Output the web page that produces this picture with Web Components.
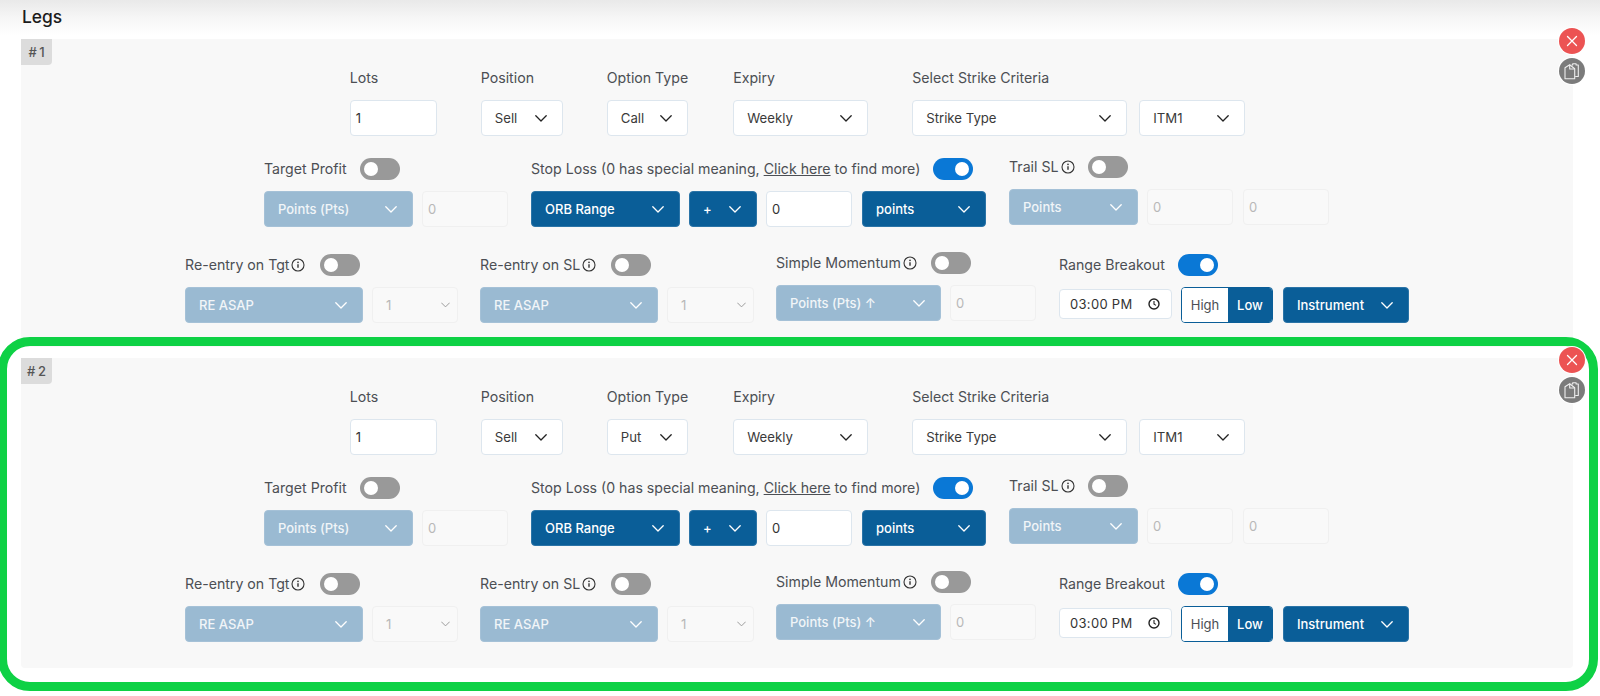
<!DOCTYPE html>
<html lang="en"><head><meta charset="utf-8"><title>Legs</title>
<style>
html,body{margin:0;padding:0;background:#fff;height:696px;overflow:hidden;font-family:Inter,"Liberation Sans",sans-serif;}
</style></head><body>
<leg-page>
  <leg-card num="1" option="Call" style="--pb:24px;--mb:11px"></leg-card>
  <leg-card num="2" option="Put" style="--pb:26px;--mb:0px"></leg-card>
</leg-page>
<leg-highlight></leg-highlight>
<script>
const chevron = c => `<svg width="12" height="7" viewBox="0 0 12 7" fill="none" aria-hidden="true"><path d="M.8.8 6 6 11.2.8" stroke="${c}" stroke-width="1.3" stroke-linecap="round" stroke-linejoin="round"/></svg>`;

customElements.define('leg-page', class extends HTMLElement {
  constructor(){super();this.attachShadow({mode:'open'}).innerHTML=`<style>
    :host{display:block;font-family:Inter,"Liberation Sans",sans-serif}
    header{padding:6px 22px 12px;background:linear-gradient(#e9e9e9,#f6f6f6 45%,#fff 90%);font-size:17.4px;line-height:21px;font-weight:500;color:#1c1c1c}
  </style><header>Legs</header><slot></slot>`;}
});

customElements.define('leg-select', class extends HTMLElement {
  constructor(){super();const k=this.getAttribute('kind')||'light';
    const col={light:'#222',dark:'#fff',faded:'#fff',ghost:'#999'}[k];
    this.attachShadow({mode:'open'}).innerHTML=`<style>
    :host{display:flex;flex:none;box-sizing:border-box;height:36px;align-items:center;justify-content:space-between;border-radius:4px;border:1px solid #dde6ee;background:#fff;color:#3a3a3a;font-size:13.2px;padding:0 15px 0 13px;white-space:nowrap}
    :host([kind=dark]){background:#0a5e98;border-color:#2b74a7;color:#fff;font-weight:500;font-size:13px}
    :host([kind=faded]){background:#9abad2;border-color:#a5c1d7;color:#f1f5f8;font-weight:500;font-size:13px}
    :host([kind=ghost]){background:#f9f9f9;border-color:#f0f0f0;color:#b8b8b8;padding:0 7px 0 13px}
    svg{flex:none}
    :host([kind=ghost]) svg{width:9px;height:6px}
    </style><span><slot></slot></span>${chevron(col)}`;}
});

customElements.define('leg-input', class extends HTMLElement {
  constructor(){super();this.attachShadow({mode:'open'}).innerHTML=`<style>
    :host{display:flex;flex:none;box-sizing:border-box;width:86px;height:36px;align-items:center;border-radius:4px;border:1px solid #dde6ee;background:#fff;color:#333;font-size:13px;padding:0 5px}
    :host([disabled]){background:#f9f9f9;border-color:#f0f0f0;color:#b8b8b8}
    </style><slot></slot>`;}
});

customElements.define('leg-toggle', class extends HTMLElement {
  constructor(){super();this.attachShadow({mode:'open'}).innerHTML=`<style>
    :host{display:flex;flex:none;box-sizing:border-box;width:40px;height:22px;border-radius:11px;background:#999;align-items:center;padding:0 4px;justify-content:flex-start}
    :host([on]){background:#0a78d6;justify-content:flex-end}
    i{display:block;width:14px;height:14px;border-radius:50%;background:#fff}
    </style><i></i>`;}
});

customElements.define('leg-info', class extends HTMLElement {
  constructor(){super();this.attachShadow({mode:'open'}).innerHTML=`<style>
    :host{display:inline-flex;flex:none;width:14px;height:14px;margin-left:2px}
    </style><svg width="14" height="14" viewBox="0 0 14 14" fill="none"><circle cx="7" cy="7" r="6" stroke="#333" stroke-width="1.1"/><path d="M7 6.2v3.6" stroke="#333" stroke-width="1.4"/><circle cx="7" cy="4.3" r=".85" fill="#333"/></svg>`;}
});

customElements.define('leg-field', class extends HTMLElement {
  constructor(){super();this.attachShadow({mode:'open'}).innerHTML=`<style>
    :host{display:flex;flex-direction:column;flex:none}
    .head{display:flex;align-items:center;height:22px;font-size:14.15px;line-height:20px;color:#4c4f54;white-space:nowrap;gap:var(--hgap,13px)}
    .lab{display:flex;align-items:center}
    .ctl{display:flex;gap:9px;margin-top:11px;align-items:flex-start}
    :host([up]){margin-top:-2px}
    :host([plain]) .head{height:20px;padding-top:1px}
    :host([plain]) .ctl{margin-top:12px}
    </style><div class="head"><span class="lab"><slot name="label"></slot></span><slot name="toggle"></slot></div><div class="ctl"><slot></slot></div>`;}
});

customElements.define('leg-time', class extends HTMLElement {
  constructor(){super();this.attachShadow({mode:'open'}).innerHTML=`<style>
    :host{display:flex;flex:none;box-sizing:border-box;width:113px;height:30px;margin-top:2px;align-items:center;justify-content:space-between;border:1px solid #dde6ee;border-radius:4px;background:#fff;color:#333;font-size:13px;padding:0 11px 0 10px;letter-spacing:.3px;white-space:pre}
    </style><slot></slot><svg width="12" height="12" viewBox="0 0 12 12" fill="none"><circle cx="6" cy="6" r="5" stroke="#222" stroke-width="1.4"/><path d="M6 3v3.2l2 1.2" stroke="#222" stroke-width="1.1"/></svg>`;}
});

customElements.define('leg-hilo', class extends HTMLElement {
  constructor(){super();this.attachShadow({mode:'open'}).innerHTML=`<style>
    :host{display:flex;flex:none;box-sizing:border-box;width:92px;height:36px;border:1px solid #0a5e98;border-radius:4px;overflow:hidden;font-size:13px}
    span{display:flex;align-items:center;justify-content:center}
    .h{width:46px;background:#fff;color:#4c4f54}
    .l{flex:1;background:#0a5e98;color:#fff;font-weight:500}
    </style><span class="h">High</span><span class="l">Low</span>`;}
});

customElements.define('leg-card', class extends HTMLElement {
  constructor(){super();const n=this.getAttribute('num'),opt=this.getAttribute('option');
    this.attachShadow({mode:'open'}).innerHTML=`<style>
    :host{display:block;position:relative;margin:0 27px var(--mb) 21px;padding:28px 0 var(--pb);background:#f8f8f8;border-radius:4px}
    .badge{position:absolute;left:0;top:0;width:31px;height:26px;display:flex;align-items:center;justify-content:center;background:#dcdcdc;color:#555;font-size:13px;font-weight:500;word-spacing:-1px;border-radius:0 0 4px 0;white-space:pre}
    .btn{position:absolute;right:-12px;width:26px;height:26px;border-radius:50%;display:flex;align-items:center;justify-content:center;box-shadow:0 0 0 1px #fff;z-index:3}
    .close{top:-11px;background:#ec5353}
    .copy{top:19px;background:#7b7b7b}
    .row{display:flex;justify-content:center;align-items:flex-start}
    .r1{gap:44px;padding-left:1px}
    .r2{gap:23px;margin-top:22px;padding-right:1px}
    .r3{gap:22px;margin-top:27px}
    .pair{display:flex;gap:12px}
    a{color:inherit;text-decoration:underline}
    .ml{margin-left:1px}
    .mr{margin-right:1px}
    .ml1{margin-left:1px}
    </style>
    <div class="badge"># ${n}</div>
    <div class="btn close"><svg width="12" height="12" viewBox="0 0 12 12" fill="none"><path d="M1.5 1.5l9 9M10.5 1.5l-9 9" stroke="#fff" stroke-width="1.3" stroke-linecap="round"/></svg></div>
    <div class="btn copy"><svg width="18" height="18" viewBox="0 0 18 18" fill="none" stroke="#eee" stroke-width="1.1" stroke-linejoin="round"><path d="M8.5 3h1.2V1.8h3.4V3h2.2v11.5h-3.1"/><path d="M2 16.7V5.7l4.7-3 5 4v10z"/><path d="M6.7 2.7V7h5"/></svg></div>

    <div class="row r1">
      <leg-field plain><span slot="label">Lots</span><leg-input style="width:87px">1</leg-input></leg-field>
      <leg-field plain><span slot="label">Position</span><leg-select style="width:82px">Sell</leg-select></leg-field>
      <leg-field plain><span slot="label">Option Type</span><leg-select style="width:81px">${opt}</leg-select></leg-field>
      <leg-field plain class="ml"><span slot="label">Expiry</span><leg-select style="width:135px">Weekly</leg-select></leg-field>
      <leg-field plain><span slot="label">Select Strike Criteria</span><div class="pair"><leg-select style="width:215px">Strike Type</leg-select><leg-select style="width:106px">ITM1</leg-select></div></leg-field>
    </div>

    <div class="row r2">
      <leg-field><span slot="label">Target Profit</span><leg-toggle slot="toggle"></leg-toggle>
        <leg-select kind="faded" style="width:149px">Points (Pts)</leg-select><leg-input disabled>0</leg-input></leg-field>
      <leg-field><span slot="label">Stop Loss (0 has special meaning,&nbsp;<a>Click here</a>&nbsp;to find more)</span><leg-toggle slot="toggle" on></leg-toggle>
        <leg-select kind="dark" style="width:149px">ORB Range</leg-select><leg-select kind="dark" style="width:68px">+</leg-select><leg-input>0</leg-input><leg-select kind="dark" class="ml1" style="width:124px">points</leg-select></leg-field>
      <leg-field up><span slot="label" style="display:flex;align-items:center">Trail SL<leg-info></leg-info></span><leg-toggle slot="toggle"></leg-toggle>
        <leg-select kind="faded" style="width:129px">Points</leg-select><leg-input disabled>0</leg-input><leg-input disabled class="ml1">0</leg-input></leg-field>
    </div>

    <div class="row r3">
      <leg-field style="--hgap:15px"><span slot="label" style="display:flex;align-items:center">Re-entry on Tgt<leg-info></leg-info></span><leg-toggle slot="toggle"></leg-toggle>
        <leg-select kind="faded" style="width:178px">RE ASAP</leg-select><leg-select kind="ghost" style="width:86px">1</leg-select></leg-field>
      <leg-field style="--hgap:15px"><span slot="label" style="display:flex;align-items:center">Re-entry on SL<leg-info></leg-info></span><leg-toggle slot="toggle"></leg-toggle>
        <leg-select kind="faded" style="width:178px">RE ASAP</leg-select><leg-select kind="ghost" style="width:87px">1</leg-select></leg-field>
      <leg-field up class="mr" style="--hgap:14px"><span slot="label" style="display:flex;align-items:center">Simple Momentum<leg-info></leg-info></span><leg-toggle slot="toggle"></leg-toggle>
        <leg-select kind="faded" style="width:165px">Points (Pts) ↑</leg-select><leg-input disabled>0</leg-input></leg-field>
      <leg-field><span slot="label">Range Breakout</span><leg-toggle slot="toggle" on></leg-toggle>
        <leg-time>03:00 PM</leg-time><leg-hilo></leg-hilo><leg-select kind="dark" class="ml1" style="width:126px">Instrument</leg-select></leg-field>
    </div>`;}
});

customElements.define('leg-highlight', class extends HTMLElement {
  constructor(){super();this.attachShadow({mode:'open'}).innerHTML=`<style>
    :host{display:block;position:absolute;left:-2px;top:337px;width:1600px;height:354px;box-sizing:border-box;border:9px solid #0ed145;border-radius:32px;z-index:2;pointer-events:none}
    </style>`;}
});
</script>
</body></html>
